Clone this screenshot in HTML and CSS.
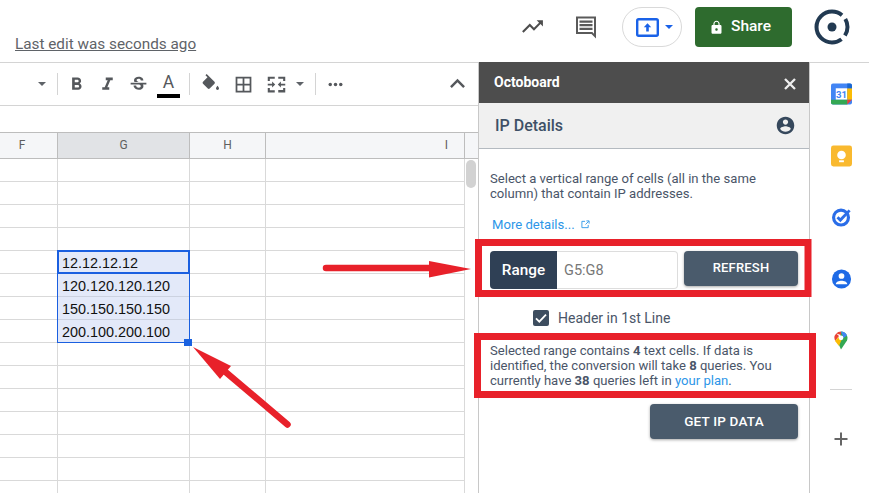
FILE: index.html
```html
<!DOCTYPE html>
<html lang="en">
<head>
<meta charset="utf-8">
<title>Octoboard IP Details</title>
<link rel="stylesheet" href="styles.css">
</head>
<body>
<div class="page">
  <header class="topbar">
    <a class="last-edit">Last edit was seconds ago</a>
    <div class="top-actions">
      <svg class="ico-trend" viewBox="0 0 24 24"><path d="M16 6l2.290 2.290-4.880 4.880-4-4L2 16.590 3.410 18l6-6 4 4 6.300-6.290L22 12V6z"/></svg>
      <svg class="ico-comment" viewBox="0 0 24 24"><path fill-rule="evenodd" d="M2 1.500h20v22l-4.500-4.500H2zM4 3.500v13.500h14.300L20 18.700V3.500z"/><path d="M5.500 5.500h13v2.200h-13zM5.500 9.100h13v2.200h-13zM5.500 12.700h13v2.200h-13z"/></svg>
      <div class="present">
        <svg class="ico-present" viewBox="0 0 23 19"><rect x="1.200" y="1.200" width="20.600" height="16.600" rx="1.500" fill="none" stroke="#1a62e8" stroke-width="2.400"/><path d="M11.500 5.300l3.700 3.900h-2.400v4.300h-2.600V9.200H7.800z" fill="#1a62e8"/></svg>
        <span class="caret caret-blue"></span>
      </div>
      <button class="share">
        <svg class="ico-lock" viewBox="0 0 24 24"><path d="M18 8h-1V6c0-2.760-2.240-5-5-5S7 3.240 7 6v2H6c-1.100 0-2 .9-2 2v10c0 1.100.9 2 2 2h12c1.100 0 2-.9 2-2V10c0-1.100-.9-2-2-2zm-6 9c-1.100 0-2-.9-2-2s.9-2 2-2 2 .9 2 2-.9 2-2 2zm3.100-9H8.900V6c0-1.710 1.390-3.100 3.100-3.100 1.710 0 3.100 1.390 3.100 3.100v2z"/></svg>
        <span>Share</span>
      </button>
      <svg class="ico-logo" viewBox="0 0 36 36"><circle cx="18" cy="18" r="15.500" fill="none" stroke="#223a52" stroke-width="4" stroke-dasharray="9 5 69.400 5 9" /><circle cx="18" cy="18" r="4.500" fill="#223a52"/></svg>
    </div>
  </header>

  <div class="workspace">
    <section class="sheet">
      <div class="toolbar">
        <span class="tool"><span class="caret"></span></span>
        <span class="divider"></span>
        <div class="tool-group">
          <svg class="tool" viewBox="0 0 24 24"><path d="M15.600 10.790c.97-.67 1.650-1.770 1.650-2.790 0-2.260-1.750-4-4-4H7v14h7.040c2.090 0 3.710-1.700 3.710-3.790 0-1.520-.86-2.820-2.150-3.420zM10 6.500h3c.83 0 1.500.67 1.500 1.500s-.67 1.500-1.500 1.500h-3v-3zm3.500 9H10v-3h3.500c.83 0 1.500.67 1.500 1.500s-.67 1.500-1.500 1.500z"/></svg>
          <svg class="tool" viewBox="0 0 24 24"><path d="M10 4v3h2.210l-3.420 8H6v3h8v-3h-2.210l3.420-8H18V4z"/></svg>
          <svg class="tool" viewBox="0 0 24 24"><path d="M6.850 7.080C6.850 4.370 9.450 3 12.240 3c1.640 0 3 .49 3.900 1.280.77.65 1.460 1.730 1.460 3.240h-3.010c0-.31-.05-.59-.15-.85-.29-.86-1.200-1.280-2.250-1.280-1.860 0-2.340 1.020-2.340 1.700 0 .48.25.88.74 1.210.38.25.77.48 1.410.7H7.390c-.21-.34-.54-.89-.54-1.920zM21 12v-2H3v2h9.620c1.150.45 1.960.75 1.960 1.970 0 1-.81 1.670-2.280 1.670-1.540 0-2.930-.54-2.930-2.510H6.400c0 .55.08 1.130.24 1.580.81 2.290 3.320 3.300 5.670 3.300 2.250 0 5.300-.89 5.300-4.050 0-.3-.01-1.160-.48-1.940H21V12z"/></svg>
          <span class="text-color"><span class="text-color-a">A</span><span class="text-color-bar"></span></span>
        </div>
        <span class="divider divider-b"></span>
        <div class="tool-group tool-group-b">
          <svg class="tool" viewBox="0 0 24 24"><path d="M16.560 8.940L7.620 0 6.210 1.410l2.380 2.380-5.150 5.150c-.59.59-.59 1.540 0 2.120l5.500 5.500c.29.29.68.44 1.060.44s.77-.15 1.060-.44l5.500-5.500c.59-.58.59-1.530 0-2.120z"/><path d="M20 13.500s-1.700 1.900-1.700 3c0 .9.800 1.700 1.700 1.700s1.700-.8 1.700-1.700c0-1.100-1.700-3-1.700-3z"/></svg>
          <svg class="tool" viewBox="0 0 24 24"><path d="M3 3v18h18V3H3zm8 16H5v-6h6v6zm0-8H5V5h6v6zm8 8h-6v-6h6v6zm0-8h-6V5h6v6z"/></svg>
          <svg class="tool" viewBox="0 0 24 24"><path d="M2 3h8v2.400H4.400V8H2zM14 3h8v5h-2.400V5.400H14zM2 16h2.400v2.600H10V21H2zM19.600 16H22v5h-8v-2.600h5.600zM2 11h5V8.500l3.500 3.500L7 15.500V13H2zM22 11h-5V8.500L13.500 12l3.500 3.500V13h5z"/></svg>
        </div>
        <span class="tool tool-narrow"><span class="caret"></span></span>
        <span class="divider divider-c"></span>
        <svg class="tool tool-dots" viewBox="0 0 24 24"><circle cx="6" cy="12" r="2"/><circle cx="12" cy="12" r="2"/><circle cx="18" cy="12" r="2"/></svg>
        <svg class="tool tool-chevron" viewBox="0 0 24 24"><path d="M5.500 16L12 9.500 18.500 16 20.500 14 12 5.500 3.500 14z"/></svg>
      </div>
      <div class="formula-bar"></div>
      <div class="sheet-body">
        <div class="grid-area">
          <div class="col-heads">
            <div class="col-head head-f">F</div>
            <div class="col-head head-g">G</div>
            <div class="col-head">H</div>
            <div class="col-head head-i">I</div>
          </div>
          <div class="cells">
            <div class="cell"></div><div class="cell"></div><div class="cell"></div><div class="cell"></div>
            <div class="cell"></div><div class="cell"></div><div class="cell"></div><div class="cell"></div>
            <div class="cell"></div><div class="cell"></div><div class="cell"></div><div class="cell"></div>
            <div class="cell"></div><div class="cell"></div><div class="cell"></div><div class="cell"></div>
            <div class="cell"></div><div class="cell cell-sel">12.12.12.12</div><div class="cell"></div><div class="cell"></div>
            <div class="cell"></div><div class="cell cell-sel">120.120.120.120</div><div class="cell"></div><div class="cell"></div>
            <div class="cell"></div><div class="cell cell-sel">150.150.150.150</div><div class="cell"></div><div class="cell"></div>
            <div class="cell"></div><div class="cell cell-sel">200.100.200.100</div><div class="cell"></div><div class="cell"></div>
            <div class="cell"></div><div class="cell"></div><div class="cell"></div><div class="cell"></div>
            <div class="cell"></div><div class="cell"></div><div class="cell"></div><div class="cell"></div>
            <div class="cell"></div><div class="cell"></div><div class="cell"></div><div class="cell"></div>
            <div class="cell"></div><div class="cell"></div><div class="cell"></div><div class="cell"></div>
            <div class="cell"></div><div class="cell"></div><div class="cell"></div><div class="cell"></div>
            <div class="cell"></div><div class="cell"></div><div class="cell"></div><div class="cell"></div>
            <div class="cell"></div><div class="cell"></div><div class="cell"></div><div class="cell"></div>
            <div class="selection"></div>
            <div class="active-cell"></div>
            <div class="fill-handle"></div>
          </div>
        </div>
        <div class="scroll-track"><div class="scroll-head"></div><div class="scroll-thumb"></div></div>
      </div>
    </section>

    <aside class="panel">
      <div class="panel-title">
        <span>Octoboard</span>
        <svg class="ico-close" viewBox="0 0 12 12"><path d="M1 1l10 10M11 1L1 11" fill="none" stroke="#eee" stroke-width="2.300"/></svg>
      </div>
      <div class="panel-sub">
        <span>IP Details</span>
        <svg class="ico-account" viewBox="0 0 24 24"><path d="M12 2C6.480 2 2 6.480 2 12s4.480 10 10 10 10-4.480 10-10S17.520 2 12 2zm0 3c1.660 0 3 1.340 3 3s-1.340 3-3 3-3-1.340-3-3 1.340-3 3-3zm0 14.200c-2.500 0-4.710-1.280-6-3.220.03-1.990 4-3.080 6-3.080 1.990 0 5.970 1.090 6 3.080-1.290 1.940-3.500 3.220-6 3.220z"/></svg>
      </div>
      <div class="panel-body">
        <p class="intro">Select a vertical range of cells (all in the same column) that contain IP addresses.</p>
        <a class="more">More details...
          <svg class="ico-ext" viewBox="0 0 10 10"><path d="M1 1.500h3.500M1 1.500v7h7V5.500M5 5l3.500-3.500M6 1h3v3" fill="none" stroke="#2d96e8" stroke-width="1"/></svg>
        </a>
        <div class="range-row">
          <div class="range-field">
            <span class="range-label">Range</span>
            <span class="range-value">G5:G8</span>
          </div>
          <button class="btn btn-refresh">REFRESH</button>
        </div>
        <label class="check-row">
          <span class="checkbox"><svg viewBox="0 0 16 16"><path d="M3 8.300l3.300 3.300L13 4.700" fill="none" stroke="#fff" stroke-width="1.800"/></svg></span>
          <span>Header in 1st Line</span>
        </label>
        <p class="message">Selected range contains <b>4</b> text cells. If data is identified, the conversion will take <b>8</b> queries. You currently have <b>38</b> queries left in <a class="plan">your plan</a>.</p>
        <div class="action-row"><button class="btn btn-get">GET IP DATA</button></div>
      </div>
    </aside>

    <nav class="rail">
      <svg class="rail-ico" viewBox="0 0 22 22"><rect width="22" height="22" rx="2" fill="#4285f4"/><path d="M5 5h12v12H5z" fill="#fff"/><path d="M17 5h5v12h-5z" fill="#fbbc04"/><path d="M0 17h17v5H2a2 2 0 0 1-2-2z" fill="#34a853"/><path d="M17 17h5l-5 5z" fill="#ea4335"/><path d="M17 0h3a2 2 0 0 1 2 2v3h-5z" fill="#1967d2"/><text class="cal-num" x="11" y="15.200" text-anchor="middle">31</text></svg>
      <svg class="rail-ico" viewBox="0 0 22 22"><rect width="22" height="22" rx="2.500" fill="#f9b92f"/><circle cx="11" cy="10" r="4.500" fill="#fff"/><rect x="8.500" y="15.500" width="5" height="2" fill="#fff"/></svg>
      <svg class="rail-ico" viewBox="0 0 22 22"><circle cx="10.500" cy="10.500" r="7.800" fill="none" stroke="#2a6de8" stroke-width="3.300"/><path d="M6.800 10.200l3 3L19.500 3" fill="none" stroke="#2a6de8" stroke-width="3"/></svg>
      <svg class="rail-ico" viewBox="0 0 22 22"><circle cx="11" cy="10" r="10" fill="#1e6ae6"/><circle cx="11" cy="6.800" r="3" fill="#fff"/><path d="M5 15.500c0-2.500 3.500-3.600 6-3.600s6 1.100 6 3.600z" fill="#fff"/></svg>
      <svg class="rail-ico rail-maps" viewBox="0 0 14 19"><path d="M7 .5A6.500 6.500 0 0 1 13 9.500L7 18.500 5 14z" fill="#34a853"/><path d="M2.200 2.500A6.500 6.500 0 0 1 7 .5L7 4z" fill="#ea4335"/><path d="M7 .5a6.500 6.500 0 0 1 6 4L9.500 7z" fill="#4285f4"/><path d="M2.200 2.500L5 5 1.300 10A6.500 6.500 0 0 1 2.200 2.500z" fill="#ea4335"/><path d="M1 10L4.500 6l3 3-2.500 6z" fill="#fbbc04"/><circle cx="7" cy="6.800" r="2.400" fill="#fff"/></svg>
      <span class="rail-divider"></span>
      <svg class="rail-plus" viewBox="0 0 14 14"><path d="M6 .5h2V6h5.500v2H8v5.500H6V8H.5V6H6z"/></svg>
    </nav>
  </div>

  <svg class="annotations" viewBox="0 0 869 493">
    <rect class="note-box" x="478.500" y="242.500" width="329.500" height="51"/>
    <rect class="note-box" x="477.500" y="336.500" width="335" height="58"/>
    <path class="note-line" d="M326 268H432"/>
    <path class="note-head" d="M429 261L471 269 429 277.500z"/>
    <path class="note-line" d="M287.500 424.500L222 369"/>
    <path class="note-head" d="M193 347L231 366 220 379z"/>
  </svg>
</div>
</body>
</html>
```
FILE: styles.css
```css
* { box-sizing: border-box; }
html, body { margin: 0; padding: 0; }
body { background: #fff; font-family: Roboto, "Liberation Sans", sans-serif; color: #4a5568; }
.page { position: relative; width: 869px; height: 493px; overflow: hidden; display: flex; flex-direction: column; }

.topbar { height: 62px; display: flex; justify-content: space-between; flex: none; }
.last-edit { margin: 35px 0 0 15px; font-size: 15.300px; line-height: 18px; color: #5f6368; text-decoration: underline; }
.top-actions { display: flex; align-items: flex-start; }
.top-actions svg { flex: none; }
.ico-trend { width: 25px; height: 25px; margin-top: 14px; fill: #4d4d4d; }
.ico-comment { width: 24px; height: 24px; margin: 15px 0 0 29px; fill: #5a5a5a; }
.present { width: 60px; height: 40px; margin: 7px 0 0 24px; border: 1px solid #d9d9d9; border-radius: 20px; display: flex; align-items: center; padding-left: 13px; }
.ico-present { width: 23px; height: 19px; }
.caret { display: block; width: 0; height: 0; border-left: 4.500px solid transparent; border-right: 4.500px solid transparent; border-top: 4.500px solid #5f6368; }
.caret-blue { margin-left: 6px; border-top-color: #1a62e8; }
.share { width: 97px; height: 40px; margin: 7px 0 0 13px; border: 0; border-radius: 4px; background: #2e6b2e; color: #fff; font: 500 15.500px Roboto, sans-serif; display: flex; align-items: center; padding: 0 0 2px 14px; gap: 7px; }
.ico-lock { width: 15px; height: 15px; fill: #fff; margin-top: 3px; }
.ico-logo { width: 36px; height: 36px; margin: 9px 19px 0 22px; }

.workspace { flex: 1; display: flex; min-height: 0; }
.sheet { width: 478px; flex: none; border-top: 1px solid #d4d4d4; display: flex; flex-direction: column; }
.toolbar { height: 43px; flex: none; border-bottom: 1px solid #d4d4d4; display: flex; align-items: center; padding-left: 30px; }
.tool { width: 24px; height: 24px; flex: none; fill: #55585c; display: flex; align-items: center; justify-content: center; }
.toolbar svg.tool { width: 21px; height: 21px; margin: 0 1.500px; }
.divider { width: 1px; height: 22px; background: #d4d4d4; margin-left: 3px; margin-right: 6px; flex: none; }
.divider-b { margin-left: 9px; margin-right: 8px; }
.divider-c { margin-left: 3px; margin-right: 7px; }
.tool-group { display: flex; gap: 7px; align-items: center; }
.tool-group-b { gap: 9px; }
.text-color { width: 23px; height: 26px; display: flex; flex-direction: column; align-items: center; justify-content: flex-end; margin-top: 1px; }
.text-color-a { font-size: 17.500px; line-height: 19px; color: #55585c; }
.text-color-bar { width: 23px; height: 4px; background: #000; flex: none; margin-top: 2px; }
.tool-chevron { margin-left: auto !important; margin-right: 10.500px !important; }
.formula-bar { height: 26px; flex: none; }
.sheet-body { flex: 1; display: flex; min-height: 0; }
.grid-area { width: 465px; flex: none; }
.col-heads { display: grid; grid-template-columns: 58px 132px 76px 199px; height: 27px; }
.col-head { background: #f5f6f8; border-top: 1px solid #bdbdbd; border-bottom: 1px solid #bdbdbd; border-right: 1px solid #bdbdbd; font-size: 12px; line-height: 25px; text-align: center; color: #5f5f5f; }
.head-f { padding-right: 13px; }
.head-g { background: #e1e3e6; }
.head-i { text-align: right; padding-right: 16px; }
.cells { position: relative; display: grid; grid-template-columns: 58px 132px 76px 199px; grid-auto-rows: 23px; }
.cell { border-right: 1px solid #d9d9d9; border-bottom: 1px solid #d9d9d9; font-family: "Liberation Sans", Arial, sans-serif; font-size: 14.400px; line-height: 23px; color: #111; padding: 1px 0 0 4px; }
.cell-sel { background: #e3e9f9; border-bottom-color: #ccd2e0; }
.selection { position: absolute; left: 57px; top: 91px; width: 133px; height: 93px; border: 1px solid #1a5fe0; }
.active-cell { position: absolute; left: 57px; top: 91px; width: 133px; height: 24px; border: 2px solid #1a5fe0; }
.fill-handle { position: absolute; left: 184px; top: 180px; width: 8px; height: 7px; background: #1a62e0; }
.scroll-track { width: 13px; flex: none; }
.scroll-head { height: 27px; background: #f5f6f8; border-top: 1px solid #bdbdbd; border-bottom: 1px solid #bdbdbd; }
.scroll-thumb { width: 10px; height: 28px; margin: 1px 0 0 1px; background: #d2d2d2; border-radius: 5px; }

.panel { width: 332px; flex: none; border-left: 1px solid #c8c8c8; border-right: 1px solid #c8c8c8; display: flex; flex-direction: column; }
.panel-title { height: 41px; flex: none; background: #4d4d4d; color: #fff; font-size: 14px; font-weight: 700; display: flex; align-items: center; justify-content: space-between; padding: 0 13px 1px 15px; }
.ico-close { width: 12px; height: 12px; fill: none; margin-top: 3px; }
.panel-sub { height: 46px; flex: none; background: #f0f0f0; border-bottom: 1px solid #b4bac0; color: #3e5066; font-size: 16px; font-weight: 500; display: flex; align-items: center; justify-content: space-between; padding: 0 13px 0 16px; }
.ico-account { width: 21px; height: 21px; fill: #36485c; }
.panel-body { padding: 22px 11px 0 11px; font-size: 13.100px; line-height: 15px; }
.intro { margin: 0; }
.more { display: block; margin: 16px 0 0 2px; color: #2d96e8; line-height: 16px; }
.ico-ext { width: 9px; height: 9px; margin-left: 3px; }
.range-row { display: flex; margin-top: 18px; justify-content: space-between; align-items: flex-start; }
.range-field { width: 188px; height: 38px; display: flex; }
.range-label { width: 67px; flex: none; background: #2f4055; color: #fff; font-size: 15.300px; font-weight: 500; display: flex; align-items: center; justify-content: center; border-radius: 4px 0 0 4px; }
.range-value { flex: 1; padding-left: 7px; font-size: 14.500px; color: #777; display: flex; align-items: center; border: 1px solid #ddd; border-left: 0; border-radius: 0 4px 4px 0; }
.btn { border: 0; border-radius: 4px; background: #4a5b6c; color: #fff; font: 500 13px Roboto, sans-serif; letter-spacing: .2px; box-shadow: 0 1px 3px rgba(0,0,0,.35); padding: 0 0 2px; }
.btn-refresh { width: 114px; height: 35px; }
.check-row { display: flex; align-items: center; gap: 9px; margin: 21px 0 0 43px; font-size: 14px; line-height: 16px; }
.checkbox { width: 16px; height: 16px; border-radius: 2px; background: #3d4d5f; display: block; }
.checkbox svg { display: block; }
.message { margin: 17px 0 0; }
.message b { font-weight: 700; }
.plan { color: #2d96e8; }
.action-row { display: flex; justify-content: flex-end; margin-top: 16px; }
.btn-get { width: 148px; height: 35px; font-size: 13.500px; }

.rail { flex: 1; border-top: 1px solid #d4d4d4; display: flex; flex-direction: column; align-items: center; padding: 20px 0 0 3px; }
.rail-ico { width: 21px; height: 22px; margin-bottom: 40px; flex: none; }
.cal-num { font: 700 10px Roboto, sans-serif; fill: #4285f4; }
.rail-maps { width: 14px; height: 19px; margin-bottom: 0; }
.rail-divider { width: 22px; height: 1px; background: #d4d4d4; margin-top: 39px; }
.rail-plus { width: 14px; height: 14px; margin-top: 42px; fill: #666; }

.annotations { position: absolute; left: 0; top: 0; width: 869px; height: 493px; pointer-events: none; }
.note-box { fill: none; stroke: #e8212a; stroke-width: 7; }
.note-line { fill: none; stroke: #e8212a; stroke-width: 6.500; stroke-linecap: round; }
.note-head { fill: #e8212a; }
```
